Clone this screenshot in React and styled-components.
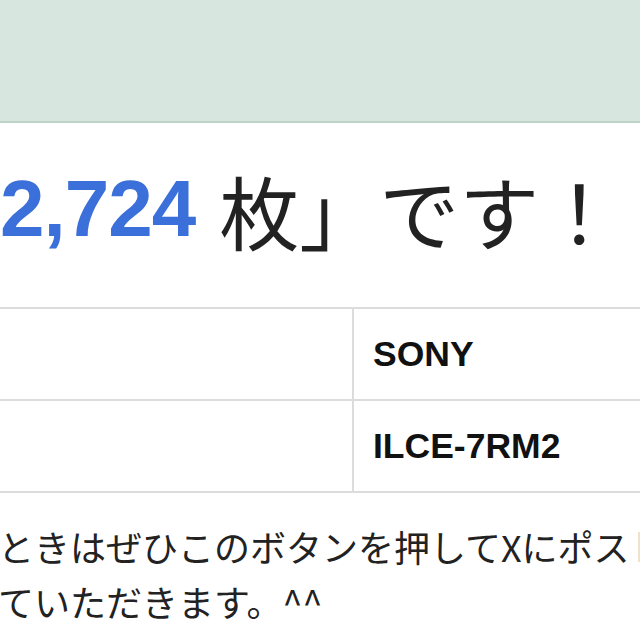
import React from 'react'
import styled, { createGlobalStyle } from 'styled-components'

const GlobalStyle = createGlobalStyle`
  html, body {
    margin: 0;
    padding: 0;
    background: #fff;
    overflow: hidden;
  }
`

const Page = styled.div`
  width: 640px;
  height: 640px;
  overflow: hidden;
  background: #fff;
  font-family: "Liberation Sans", "Noto Sans CJK JP", sans-serif;
`

const Header = styled.div`
  height: 121px;
  background: #d7e6df;
  border-bottom: 2px solid #bdd3c5;
`

const Heading = styled.div`
  height: 184px;
  display: flex;
  align-items: center;
  white-space: nowrap;
  font-size: 80px;
  line-height: 80px;
  color: #222;
  padding-bottom: 12px;
  box-sizing: border-box;
`

const Count = styled.span`
  font-family: "Liberation Sans", sans-serif;
  font-weight: bold;
  color: #3b6fd9;
  letter-spacing: -1px;
`

const Rest = styled.span`
  font-family: "Noto Sans CJK JP", sans-serif;
  font-weight: 400;
  margin-left: 24px;
`

const Table = styled.div`
  display: grid;
  grid-template-columns: 352px 1fr;
  border-top: 2px solid #dcdcdc;
`

const Cell = styled.div`
  height: 92px;
  border-bottom: 2px solid #dcdcdc;
  border-left: ${(p) => (p.value ? '2px solid #dcdcdc' : 'none')};
  display: flex;
  align-items: center;
  padding-left: 19px;
  box-sizing: border-box;
  font-family: "Liberation Sans", sans-serif;
  font-weight: bold;
  font-size: 35.5px;
  color: #111;
`

const Body = styled.div`
  padding-top: 26px;
  font-family: "Noto Sans CJK JP", sans-serif;
  font-size: 36px;
  line-height: 55px;
  color: #222;
`

const Line = styled.div`
  white-space: nowrap;
  display: flex;
  align-items: center;
  margin-left: -2px;
`

const Edge = styled.span`
  display: inline-block;
  flex: none;
  width: 4px;
  height: 30px;
  margin-left: 8px;
  background: #efe2c8;
`

export default function App() {
  return (
    <Page>
      <GlobalStyle />
      <Header />
      <Heading>
        <Count>2,724</Count>
        <Rest>枚」です！</Rest>
      </Heading>
      <Table>
        <Cell />
        <Cell value>SONY</Cell>
        <Cell />
        <Cell value>ILCE-7RM2</Cell>
      </Table>
      <Body>
        <Line>
          ときはぜひこのボタンを押してXにポス
          <Edge />
        </Line>
        <Line>ていただきます。^^</Line>
      </Body>
    </Page>
  )
}
